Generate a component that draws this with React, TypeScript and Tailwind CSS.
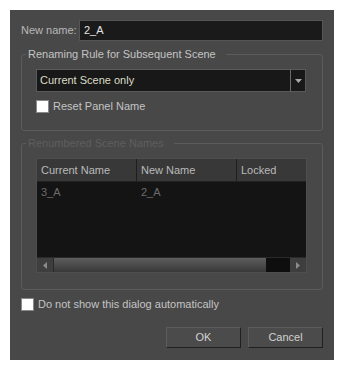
const font = { fontFamily: '"Liberation Sans", Arial, sans-serif' };

function Check({ label }: { label: string }) {
  return (
    <label className="flex items-center gap-[4px] h-[13px] text-[11px] leading-[13px] text-[#c4c4c4] whitespace-nowrap">
      <span className="w-[13px] h-[13px] bg-white border border-[#8a8a8a] shrink-0" />
      {label}
    </label>
  );
}

function Group({ title, disabled, className, children }: { title: string; disabled?: boolean; className?: string; children: React.ReactNode }) {
  return (
    <fieldset className="border border-[#5c5c5c] rounded-[3px] mt-[5px]">
      <legend
        className={`ml-[4px] pl-[2px] pr-[10px] text-[11px] leading-[16px] ${disabled ? "text-[#5e5e5e]" : "text-[#c4c4c4]"}`}
      >
        {title}
      </legend>
      <div className={className}>{children}</div>
    </fieldset>
  );
}

function Button({ children }: { children: React.ReactNode }) {
  return (
    <button className="h-[21px] w-[75px] bg-[#4b4b4b] border border-t-[#5c5c5c] border-l-[#5c5c5c] border-b-[#202020] border-r-[#202020] text-[11px] text-[#d2d2d2]">
      {children}
    </button>
  );
}

export default function App() {
  const rows = [{ current: "3_A", next: "2_A", locked: "" }];
  return (
    <div className="bg-white p-[10px] w-[344px] h-[370px]" style={font}>
      <div className="w-[324px] h-[350px] bg-[#484848] px-[11px] pt-[10px] pb-[12px] flex flex-col">
        {/* name row */}
        <div className="flex items-center h-[21px]">
          <span className="w-[58px] shrink-0 whitespace-nowrap text-[11px] text-[#b8b8b8]">New name:</span>
          <div className="flex-1 h-full bg-[#1a1a1a] border border-[#555] flex items-center px-[4px] text-[11px] text-[#e4e4e4]">
            2_A
          </div>
        </div>

        <Group title="Renaming Rule for Subsequent Scene" className="pt-[7px] pl-[14px] pr-[16px] pb-[17px]">
          <div className="flex h-[23px] bg-[#181818] border border-[#5a5a5a]">
            <div className="flex-1 flex items-center px-[3px] text-[11px] text-[#dcdcc6]">Current Scene only</div>
            <div className="w-[15px] border-l border-[#6a6a6a] flex items-center justify-center">
              <svg width="7" height="4" viewBox="0 0 7 4">
                <path d="M0 0h7L3.5 4z" fill="#a8a8a8" />
              </svg>
            </div>
          </div>
          <div className="mt-[8px]">
            <Check label="Reset Panel Name" />
          </div>
        </Group>

        <div className="-mt-[1px]">
          <Group title="Renumbered Scene Names" disabled className="pt-[7px] pl-[14px] pr-[15px] pb-[16px]">
            <div className="h-[115px] bg-[#141414] border border-[#4e4e4e] flex flex-col text-[11px]">
              <div className="grid grid-cols-[100px_100px_1fr] h-[23px] bg-[#383838] text-[#bababa] border-b border-[#222]">
                <div className="flex items-center px-[4px] border-r border-[#1e1e1e]">Current Name</div>
                <div className="flex items-center px-[4px] border-r border-[#1e1e1e]">New Name</div>
                <div className="flex items-center px-[4px]">Locked</div>
              </div>
              <div className="flex-1">
                {rows.map((r) => (
                  <div key={r.current} className="grid grid-cols-[100px_100px_1fr] h-[20px] text-[#6c6c6c]">
                    <div className="flex items-center px-[4px]">{r.current}</div>
                    <div className="flex items-center px-[4px]">{r.next}</div>
                    <div className="flex items-center px-[4px]">{r.locked}</div>
                  </div>
                ))}
              </div>
              <div className="flex h-[15px] border-t border-[#2a2a2a]">
                <div className="w-[16px] bg-[#3e3e3e] flex items-center justify-center">
                  <svg width="4" height="7" viewBox="0 0 4 7"><path d="M4 0v7L0 3.5z" fill="#8c8c8c" /></svg>
                </div>
                <div className="w-[213px] bg-gradient-to-b from-[#5e5e5e] to-[#383838] border-l border-[#2a2a2a]" />
                <div className="flex-1 bg-[#0e0e0e]" />
                <div className="w-[16px] bg-[#3e3e3e] flex items-center justify-center">
                  <svg width="4" height="7" viewBox="0 0 4 7"><path d="M0 0v7L4 3.5z" fill="#8c8c8c" /></svg>
                </div>
              </div>
            </div>
          </Group>
        </div>

        <div className="mt-[8px]">
          <Check label="Do not show this dialog automatically" />
        </div>

        <div className="mt-auto flex justify-end gap-[7px]">
          <Button>OK</Button>
          <Button>Cancel</Button>
        </div>
      </div>
    </div>
  );
}
